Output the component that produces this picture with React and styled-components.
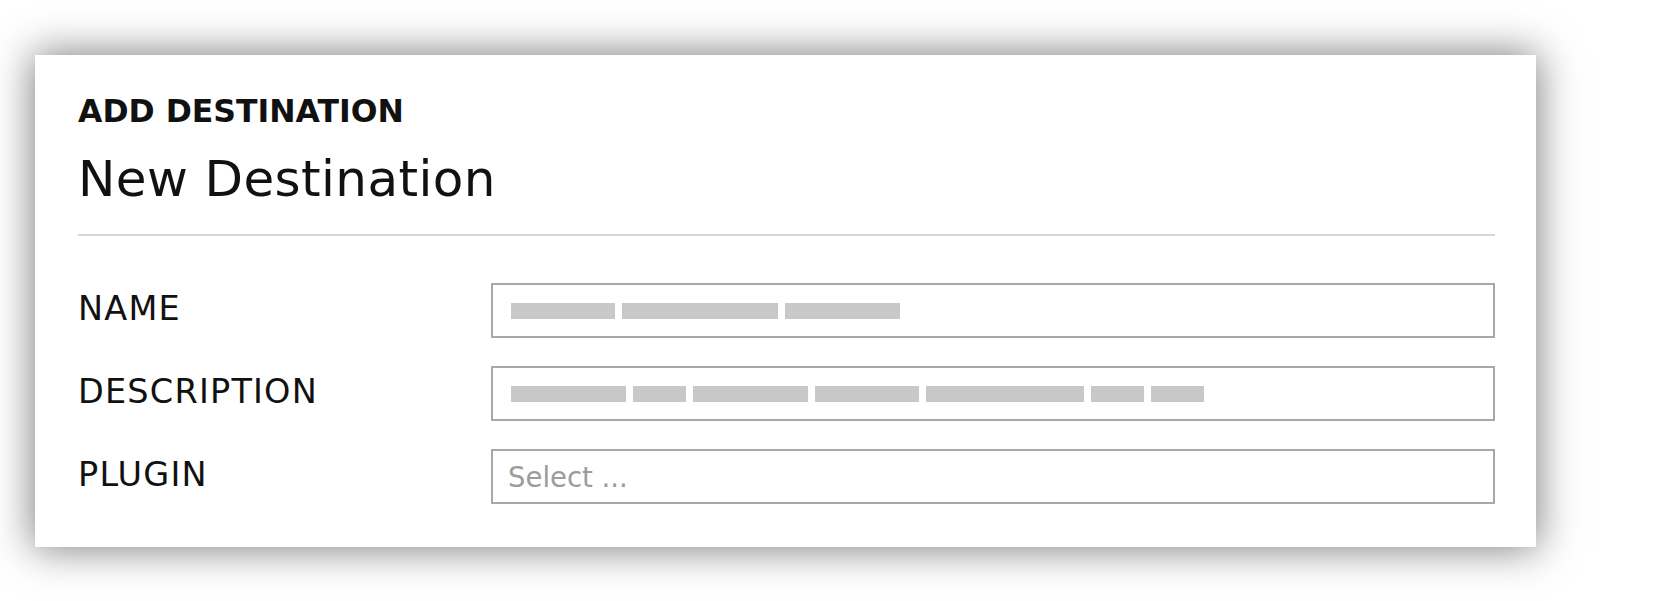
import React from "react";
import styled, { createGlobalStyle } from "styled-components";

const GlobalStyle = createGlobalStyle`
  html, body {
    margin: 0;
    padding: 0;
    background: #ffffff;
  }
  body {
    font-family: "DejaVu Sans", "Liberation Sans", sans-serif;
    color: #111111;
  }
  * { box-sizing: border-box; }
`;

const Page = styled.div`
  padding: 55px 0 0 35px;
  width: 1667px;
  height: 601px;
`;

const Card = styled.section`
  width: 1501px;
  background: #ffffff;
  box-shadow: 0 0 38px 2px rgba(0, 0, 0, 0.5);
  padding: 39px 41px 43px 43px;
  display: flex;
  flex-direction: column;
`;

const Eyebrow = styled.h2`
  margin: 0;
  font-family: "DejaVu Sans", sans-serif;
  font-weight: 700;
  font-size: 31.5px;
  line-height: 34px;
  letter-spacing: 0;
  color: #111111;
`;

const Title = styled.h1`
  margin: 21px 0 0 0;
  font-family: "DejaVu Sans", sans-serif;
  font-weight: 400;
  font-size: 50px;
  line-height: 60px;
  letter-spacing: 0.4px;
  color: #111111;
`;

const Divider = styled.hr`
  margin: 25px 0 0 0;
  border: none;
  height: 2px;
  background: #d6d6d6;
`;

const Form = styled.div`
  margin-top: 47px;
  display: grid;
  grid-template-columns: 413px 1fr;
  row-gap: 28px;
`;

const Label = styled.label`
  font-family: "DejaVu Sans", sans-serif;
  font-size: 33.5px;
  line-height: 51px;
  letter-spacing: 1.2px;
  color: #111111;
  align-self: start;
`;

const Field = styled.div`
  height: 55px;
  border: 2px solid #a8a8a8;
  background: #ffffff;
  display: flex;
  align-items: center;
  gap: 7px;
  padding: 0 0 0 ${(p) => (p.$select ? "15px" : "18px")};
`;

const Bar = styled.span`
  display: block;
  height: 16px;
  background: #c8c8c8;
  flex: none;
`;

const Placeholder = styled.span`
  font-family: "DejaVu Sans", sans-serif;
  font-size: 27.5px;
  letter-spacing: 0;
  color: #9c9c9c;
`;

const nameBars = [104, 156, 115];
const descBars = [115, 53, 115, 104, 158, 53, 53];

function Bars({ widths }) {
  return widths.map((w, i) => <Bar key={i} style={{ width: w }} />);
}

export default function App() {
  return (
    <>
      <GlobalStyle />
      <Page>
        <Card>
          <Eyebrow>ADD DESTINATION</Eyebrow>
          <Title>New Destination</Title>
          <Divider />
          <Form>
            <Label>NAME</Label>
            <Field>
              <Bars widths={nameBars} />
            </Field>
            <Label>DESCRIPTION</Label>
            <Field>
              <Bars widths={descBars} />
            </Field>
            <Label>PLUGIN</Label>
            <Field $select>
              <Placeholder>Select ...</Placeholder>
            </Field>
          </Form>
        </Card>
      </Page>
    </>
  );
}
